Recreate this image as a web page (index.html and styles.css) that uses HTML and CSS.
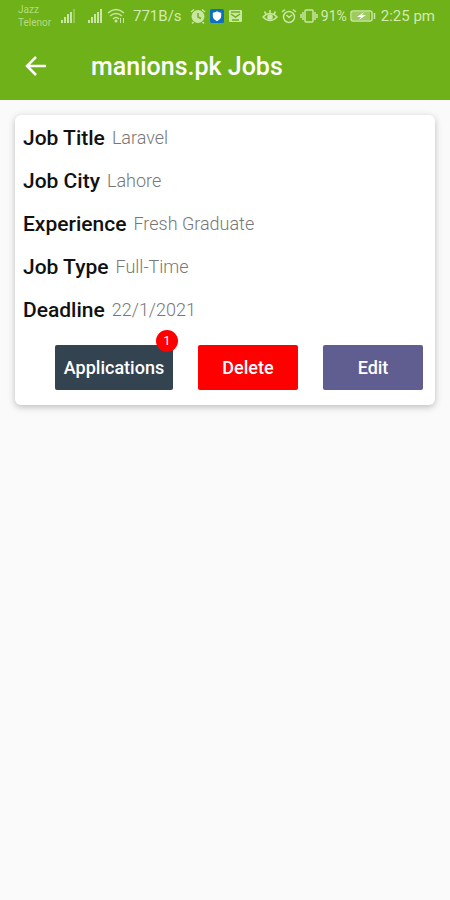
FILE: index.html
```html
<!DOCTYPE html>
<html lang="en">
<head>
    <meta charset="UTF-8">
    <meta name="viewport" content="width=device-width, initial-scale=1.0">
    <title>manions.pk Jobs</title>
    <link rel="stylesheet" href="styles.css">
</head>
<body>
    <header class="header">
        <!-- Phone status bar -->
        <div class="status-bar">
            <div class="status-left">
                <div class="carrier"><span>Jazz</span><span>Telenor</span></div>
                <svg class="signal" width="16" height="16" viewBox="0 0 16 16">
                    <path d="M1 12h2v3H1zM4 9h2v6H4zM7 6h2v9H7zM10 4h2v11h-2z"/>
                    <path opacity=".4" d="M13 1h2v14h-2z"/>
                </svg>
                <svg class="signal" width="16" height="16" viewBox="0 0 16 16">
                    <path d="M1 12h2v3H1zM4 9h2v6H4zM7 6h2v9H7zM10 4h2v11h-2zM13 1h2v14h-2z"/>
                </svg>
                <svg class="wifi" width="18" height="16" viewBox="0 0 18 16">
                    <path class="line" d="M1 5q8-7 16 0M3 8q6-5 12 0M6 11q3-3 6 0"/>
                    <circle cx="9" cy="13" r="1.5"/>
                    <path d="M13 10h1v5h-1zM16 10h1v5h-1z"/>
                </svg>
                <span class="speed">771B/s</span>
                <div class="notices">
                    <svg width="16" height="16" viewBox="0 0 16 16">
                        <circle cx="8" cy="8.500" r="6.500"/>
                        <path class="line" d="M1 4l3-2.500M15 4l-3-2.500M3.500 14L2 15.500M12.500 14l1.500 1.500"/>
                        <path class="cut" d="M8 5v4l3 1.500"/>
                    </svg>
                    <svg width="14" height="14" viewBox="0 0 15 15">
                        <rect width="15" height="15" rx="2" fill="#0b70c4"/>
                        <path fill="#fff" d="M7.500 2.500q2 1.500 4.500 1.500v3.500q0 3.500-4.500 5.500Q3 11 3 7.500V4q2.500 0 4.500-1.500z"/>
                    </svg>
                    <svg width="15" height="14" viewBox="0 0 15 14">
                        <rect x="1" y="1" width="13" height="12" rx="1"/>
                        <path class="cut" d="M3 5l4.500 3L12 5M3 3h9M4 11h7"/>
                    </svg>
                </div>
            </div>
            <div class="status-right">
                <svg width="16" height="16" viewBox="0 0 16 16">
                    <path class="line" d="M1 9q7-7 14 0-7 7-14 0zM8 5V2M4 6L2.500 3.500M12 6l1.500-2.500"/>
                    <circle cx="8" cy="9" r="2.800"/>
                </svg>
                <svg width="16" height="16" viewBox="0 0 16 16">
                    <circle class="line" cx="8" cy="9" r="5.500"/>
                    <path class="line" d="M1 4l3-2.500M15 4l-3-2.500M5.500 7L8 9.500 11 7"/>
                </svg>
                <svg width="18" height="16" viewBox="0 0 18 16">
                    <rect class="line" x="5" y="2" width="8" height="12" rx="1"/>
                    <path class="line" d="M1 6v4M3 4v8M15 4v8M17 6v4"/>
                </svg>
                <span class="percent">91%</span>
                <svg class="battery" width="26" height="14" viewBox="0 0 26 14">
                    <rect class="line" x="1" y="2" width="21" height="10" rx="2"/>
                    <rect x="2" y="3" width="18" height="8" opacity=".5"/>
                    <path fill="#fff" d="M14 3L7 8h4l-2 3 7-5h-4z"/>
                    <path class="line" d="M24.500 4v6"/>
                </svg>
                <span class="time">2:25 pm</span>
            </div>
        </div>

        <div class="toolbar">
            <button class="back-btn" type="button" aria-label="Back">
                <svg width="22" height="22" viewBox="0 0 22 22">
                    <path d="M11 2l-9 9 9 9M2 11h19"/>
                </svg>
            </button>
            <h1>manions.pk Jobs</h1>
        </div>
    </header>

    <main class="content">
        <div class="job-card">
            <dl class="details">
                <div class="row"><dt>Job Title</dt><dd>Laravel</dd></div>
                <div class="row"><dt>Job City</dt><dd>Lahore</dd></div>
                <div class="row"><dt>Experience</dt><dd>Fresh Graduate</dd></div>
                <div class="row"><dt>Job Type</dt><dd>Full-Time</dd></div>
                <div class="row"><dt>Deadline</dt><dd>22/1/2021</dd></div>
            </dl>
            <div class="actions">
                <button class="btn applications-btn" type="button">Applications<span class="badge">1</span></button>
                <button class="btn delete-btn" type="button">Delete</button>
                <button class="btn edit-btn" type="button">Edit</button>
            </div>
        </div>
    </main>
</body>
</html>
```
FILE: styles.css
```css
* {
    box-sizing: border-box;
}
body {
    margin: 0;
    min-height: 100vh;
    background-color: #fafafa;
    font-family: Roboto, sans-serif;
}
.header {
    background-color: #6eb118;
    color: #fff;
}
.status-bar {
    display: flex;
    justify-content: space-between;
    height: 32px;
    padding: 0 15px 0 18px;
    color: #d2ebb0;
    font-size: 15px;
    line-height: 20px;
}
.status-bar svg {
    flex: none;
    fill: #c9e6a4;
}
.status-bar .line {
    fill: none;
    stroke: #c9e6a4;
    stroke-width: 1.5;
}
.status-bar .cut {
    fill: none;
    stroke: #6eb118;
    stroke-width: 1.5;
}
.status-left,
.status-right {
    display: flex;
    align-items: center;
    white-space: nowrap;
}
.carrier {
    display: flex;
    flex-direction: column;
    width: 42px;
    font-size: 10px;
    line-height: 13px;
    color: #b5dc82;
}
.signal {
    margin-right: 11px;
}
.signal + .signal {
    margin-right: 4px;
}
.wifi {
    margin-right: 8px;
}
.speed {
    width: 57px;
}
.notices {
    display: flex;
    align-items: center;
    gap: 4px;
}
.status-right {
    gap: 3px;
}
.percent {
    font-size: 14px;
}
.time {
    margin-left: 2px;
}
.toolbar {
    display: flex;
    align-items: center;
    height: 68px;
    padding-left: 25px;
}
.back-btn {
    display: flex;
    width: 66px;
    padding: 0;
    border: none;
    background: none;
    cursor: pointer;
}
.back-btn svg {
    fill: none;
    stroke: #fff;
    stroke-width: 2.5;
}
h1 {
    margin: 0;
    font-size: 25px;
    font-weight: 500;
}
.content {
    padding: 15px;
}
.job-card {
    padding: 1px 12px 15px 8px;
    background-color: #fff;
    border-radius: 6px;
    box-shadow: 0 2px 7px rgba(0, 0, 0, 0.25);
}
.details {
    margin: 0;
}
.row {
    display: flex;
    align-items: center;
    gap: 7px;
    height: 43px;
}
dt {
    color: #111;
    font-size: 21px;
    font-weight: 500;
}
dd {
    margin: 0;
    color: #777;
    font-size: 18px;
    font-weight: 300;
}
.actions {
    display: flex;
    justify-content: flex-end;
    gap: 25px;
    padding-top: 14px;
}
.btn {
    position: relative;
    width: 100px;
    height: 45px;
    padding: 0;
    border: none;
    border-radius: 2px;
    color: #fff;
    font-family: inherit;
    font-size: 18px;
    font-weight: 500;
    cursor: pointer;
}
.applications-btn {
    width: 118px;
    background-color: #33434f;
}
.delete-btn {
    background-color: #ff0000;
}
.edit-btn {
    background-color: #605d91;
}
/* Counter over the corner of the button */
.badge {
    position: absolute;
    top: -15px;
    right: -5px;
    width: 22px;
    height: 22px;
    border-radius: 50%;
    background-color: #ff0000;
    font-size: 13px;
    font-weight: 400;
    line-height: 22px;
}
```
